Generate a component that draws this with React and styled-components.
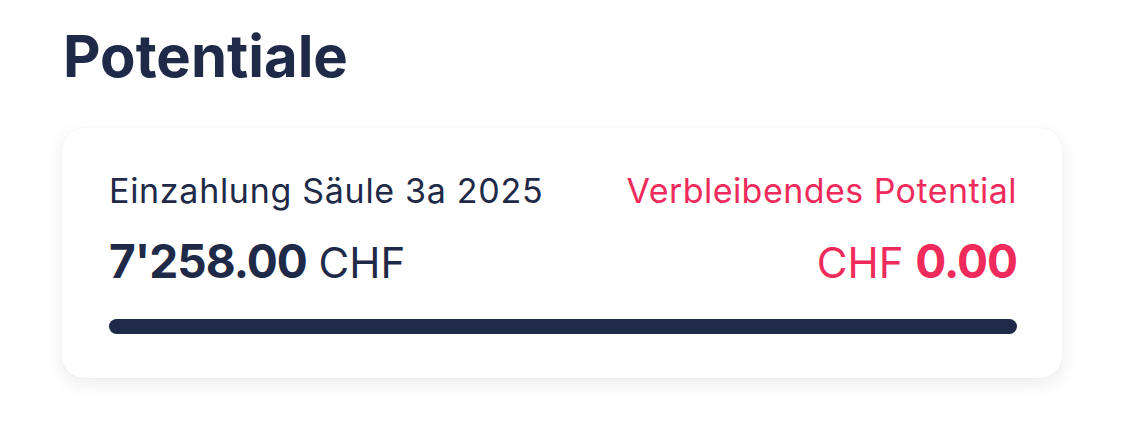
import React from "react";
import styled, { createGlobalStyle } from "styled-components";

const Global = createGlobalStyle`
  html, body { margin: 0; padding: 0; background: #ffffff; }
  body { font-family: "Inter", "Noto Sans", sans-serif; color: #1e2a47; }
`;

const Page = styled.div`
  width: 1125px;
  height: 438px;
  box-sizing: border-box;
  padding: 20px 63px 0 63px;
  display: flex;
  flex-direction: column;
`;

const Title = styled.h1`
  margin: 0;
  font-size: 58px;
  line-height: 72px;
  font-weight: 700;
  letter-spacing: 0;
  color: #1e2a47;
`;

const Card = styled.section`
  margin-top: 36px;
  margin-left: -1px;
  width: 1000px;
  height: 250px;
  box-sizing: border-box;
  background: #fff;
  border-radius: 22px;
  box-shadow: 0 6px 18px rgba(20, 30, 60, 0.08), 0 0 2px rgba(20, 30, 60, 0.06);
  padding: 40px 45px 0 47px;
  display: flex;
  flex-direction: column;
`;

const Row = styled.div`
  display: flex;
  justify-content: space-between;
  align-items: baseline;
  margin-top: ${(p) => p.$gap || 0}px;
`;

const Label = styled.span`
  font-size: 34px;
  line-height: 46px;
  font-weight: 400;
  letter-spacing: ${(p) => (p.$accent ? "0.45px" : "0.7px")};
  color: ${(p) => (p.$accent ? "#ef2b5b" : "#1e2a47")};
`;

const Amount = styled.span`
  font-size: 42px;
  line-height: 60px;
  color: ${(p) => (p.$accent ? "#ef2b5b" : "#1e2a47")};
`;

const Strong = styled.b`
  font-weight: 700;
  font-size: 46px;
  letter-spacing: -1px;
`;

const Bar = styled.div`
  margin-top: 26px;
  height: 15px;
  border-radius: 8px;
  background: #1e2a47;
`;

export default function App() {
  return (
    <>
      <Global />
      <Page>
        <Title>Potentiale</Title>
        <Card>
          <Row>
            <Label>Einzahlung Säule 3a 2025</Label>
            <Label $accent>Verbleibendes Potential</Label>
          </Row>
          <Row $gap={17}>
            <Amount>
              <Strong>7'258.00</Strong> CHF
            </Amount>
            <Amount $accent>
              CHF <Strong>0.00</Strong>
            </Amount>
          </Row>
          <Bar />
        </Card>
      </Page>
    </>
  );
}
